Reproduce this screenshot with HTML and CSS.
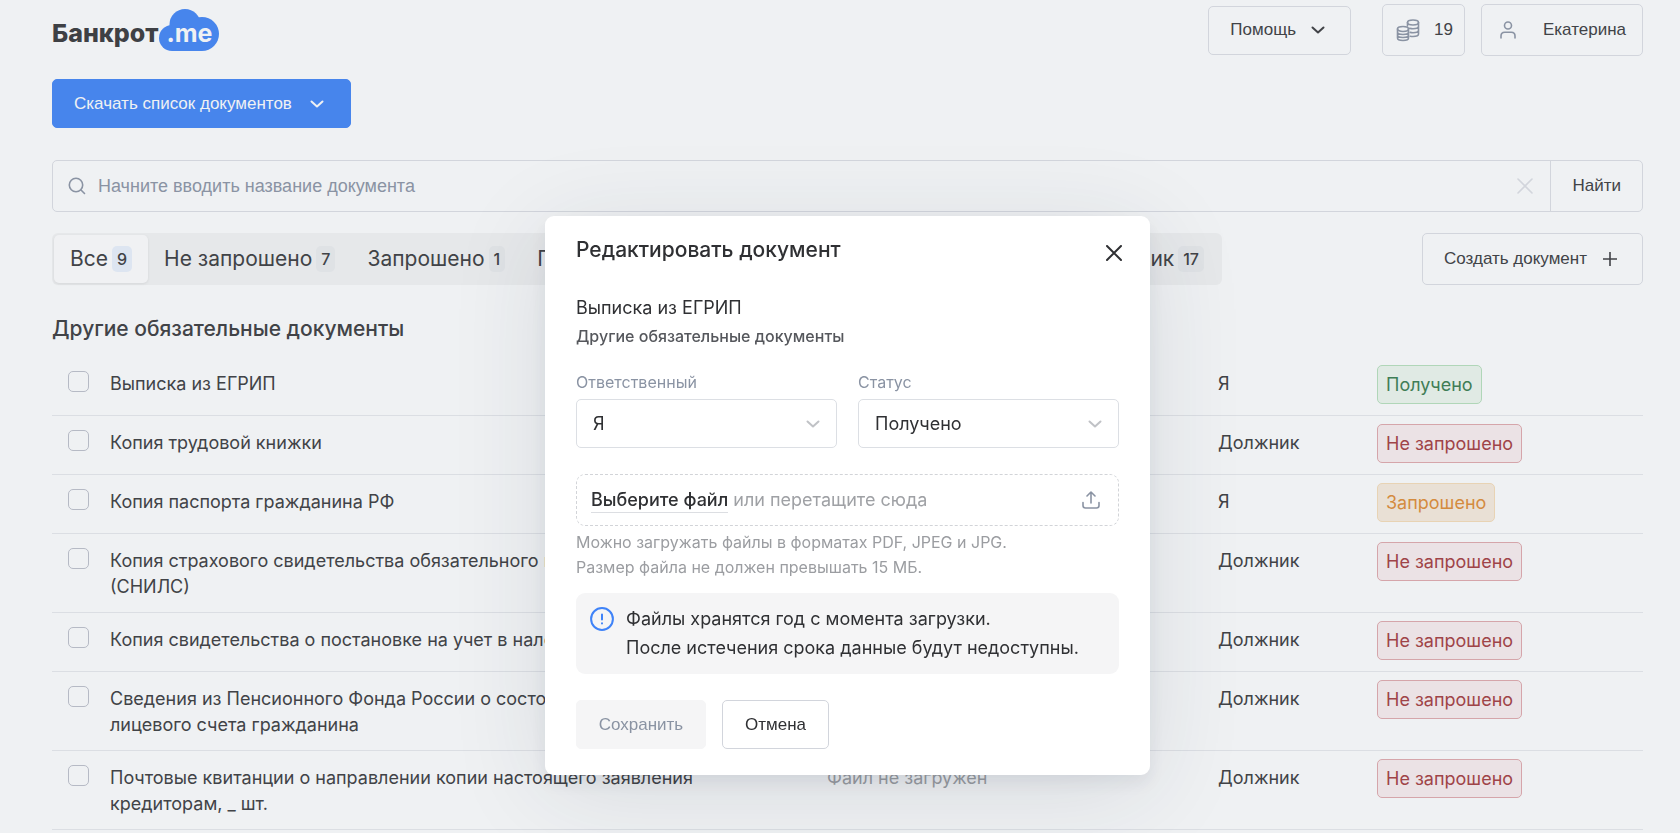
FILE: index.html
```html
<!DOCTYPE html>
<html lang="ru">
<head>
<meta charset="utf-8">
<title>Банкрот.me — документы</title>
<link rel="stylesheet" href="styles.css">
</head>
<body>
<div class="page">
  <header class="header">
    <a class="logo" href="#">
      <span class="logo-name">Банкрот</span>
      <span class="logo-cloud">
        <svg class="logo-shape" viewBox="0 0 60 42" aria-hidden="true"><circle cx="26" cy="15.500" r="15.500"/><circle cx="43" cy="25" r="17"/><circle cx="13" cy="29" r="13"/><path d="M13 16h30v26H13z"/></svg>
        <span class="logo-suffix">.me</span>
      </span>
    </a>
    <div class="header-actions">
      <button class="button help" type="button">Помощь
        <svg class="chevron" viewBox="0 0 14 8" aria-hidden="true"><path d="M1.500 1.500 7 6.500 12.500 1.500"/></svg>
      </button>
      <button class="button coins" type="button">
        <svg class="coins-icon" viewBox="0 0 24 24" aria-hidden="true"><ellipse cx="17" cy="4.500" rx="5.500" ry="2.500"/><path d="M11.500 4.500V8M22.500 4.500V16c0 1.500-2.500 2.500-5.500 2.500-1 0-2-.1-2.800-.3M22.500 8.300c0 1.500-2.500 2.500-5.500 2.500-1.300 0-2.500-.2-3.400-.5M22.500 12.200c0 1.500-2.500 2.500-5.500 2.500-1 0-2-.1-2.800-.3"/><ellipse cx="7" cy="11" rx="5.500" ry="2.500"/><path d="M1.500 11v9c0 1.500 2.500 2.500 5.500 2.500s5.500-1 5.500-2.500v-9M1.500 14c0 1.500 2.500 2.500 5.500 2.500s5.500-1 5.500-2.500M1.500 17c0 1.500 2.500 2.500 5.500 2.500s5.500-1 5.500-2.500"/></svg>
        19
      </button>
      <button class="button user" type="button">
        <svg class="user-icon" viewBox="0 0 16 18" aria-hidden="true"><circle cx="8" cy="4.500" r="3.500"/><path d="M1 17v-2c0-2.200 1.500-3.700 3.700-3.700h6.600c2.200 0 3.700 1.500 3.700 3.700v2"/></svg>
        Екатерина
      </button>
    </div>
  </header>

  <main class="content">
    <button class="button download" type="button">Скачать список документов
      <svg class="chevron" viewBox="0 0 14 8" aria-hidden="true"><path d="M1.500 1.500 7 6.500 12.500 1.500"/></svg>
    </button>

    <form class="search">
      <svg class="search-icon" viewBox="0 0 18 18" aria-hidden="true"><circle cx="8" cy="8" r="6.700"/><path d="m13 13 3.500 3.500"/></svg>
      <input class="search-input" type="text" aria-label="Название документа" placeholder="Начните вводить название документа">
      <button class="clear" type="button" aria-label="Очистить"><svg viewBox="0 0 16 16" aria-hidden="true"><path d="m1 1 14 14M15 1 1 15"/></svg></button>
      <button class="find" type="submit">Найти</button>
    </form>

    <div class="toolbar">
      <nav class="tabs">
        <button class="tab tab-active" type="button">Все <span class="count">9</span></button>
        <button class="tab" type="button">Не запрошено <span class="count">7</span></button>
        <button class="tab" type="button">Запрошено <span class="count">1</span></button>
        <button class="tab" type="button">Получено <span class="count">1</span></button>
        <button class="tab tab-last" type="button">Должник <span class="count">17</span></button>
      </nav>
      <button class="button create" type="button">Создать документ
        <svg class="plus" viewBox="0 0 14 14" aria-hidden="true"><path d="M7 0v14M0 7h14"/></svg>
      </button>
    </div>

    <h2 class="group-title">Другие обязательные документы</h2>
    <table class="documents">
      <colgroup><col class="col-check"><col class="col-name"><col class="col-file"><col class="col-owner"><col class="col-status"></colgroup>
      <tbody>
        <tr><td><input class="check" type="checkbox" aria-label="Выписка из ЕГРИП"></td><td>Выписка из ЕГРИП</td><td class="no-file"></td><td>Я</td><td class="status-cell"><span class="status received">Получено</span></td></tr>
        <tr><td><input class="check" type="checkbox" aria-label="Копия трудовой книжки"></td><td>Копия трудовой книжки</td><td class="no-file"></td><td>Должник</td><td class="status-cell"><span class="status missing">Не запрошено</span></td></tr>
        <tr><td><input class="check" type="checkbox" aria-label="Копия паспорта гражданина РФ"></td><td>Копия паспорта гражданина РФ</td><td class="no-file"></td><td>Я</td><td class="status-cell"><span class="status requested">Запрошено</span></td></tr>
        <tr><td><input class="check" type="checkbox" aria-label="Копия страхового свидетельства"></td><td>Копия страхового свидетельства обязательного пенсионного страхования (СНИЛС)</td><td class="no-file"></td><td>Должник</td><td class="status-cell"><span class="status missing">Не запрошено</span></td></tr>
        <tr><td><input class="check" type="checkbox" aria-label="Копия свидетельства о постановке на учет"></td><td>Копия свидетельства о постановке на учет в налоговой</td><td class="no-file"></td><td>Должник</td><td class="status-cell"><span class="status missing">Не запрошено</span></td></tr>
        <tr><td><input class="check" type="checkbox" aria-label="Сведения из Пенсионного Фонда"></td><td>Сведения из Пенсионного Фонда России о состоянии индивидуального лицевого счета гражданина</td><td class="no-file"></td><td>Должник</td><td class="status-cell"><span class="status missing">Не запрошено</span></td></tr>
        <tr><td><input class="check" type="checkbox" aria-label="Почтовые квитанции"></td><td>Почтовые квитанции о направлении копии настоящего заявления кредиторам, _ шт.</td><td class="no-file">Файл не загружен</td><td>Должник</td><td class="status-cell"><span class="status missing">Не запрошено</span></td></tr>
      </tbody>
    </table>
  </main>
</div>

<div class="overlay">
  <section class="modal" role="dialog" aria-modal="true" aria-labelledby="modal-title">
    <header class="modal-header">
      <h1 class="modal-title" id="modal-title">Редактировать документ</h1>
      <button class="close" type="button" aria-label="Закрыть"><svg viewBox="0 0 16 16" aria-hidden="true"><path d="m1 1 14 14M15 1 1 15"/></svg></button>
    </header>
    <p class="doc-name">Выписка из ЕГРИП</p>
    <p class="doc-group">Другие обязательные документы</p>
    <div class="fields">
      <div class="field">
        <label class="label" for="owner">Ответственный</label>
        <div class="select-box">
          <select class="select" id="owner"><option>Я</option><option>Должник</option></select>
          <svg class="select-arrow" viewBox="0 0 14 8" aria-hidden="true"><path d="M1.500 1.500 7 6.500 12.500 1.500"/></svg>
        </div>
      </div>
      <div class="field">
        <label class="label" for="status">Статус</label>
        <div class="select-box">
          <select class="select" id="status"><option>Получено</option><option>Запрошено</option><option>Не запрошено</option></select>
          <svg class="select-arrow" viewBox="0 0 14 8" aria-hidden="true"><path d="M1.500 1.500 7 6.500 12.500 1.500"/></svg>
        </div>
      </div>
    </div>
    <div class="upload">
      <p class="upload-text"><button class="choose" type="button">Выберите файл</button> или перетащите сюда</p>
      <svg class="upload-icon" viewBox="0 0 18 18" aria-hidden="true"><path d="M9 12V1M5 5l4-4 4 4M1 11.500v3c0 1.500 1 2.500 2.500 2.500h11c1.500 0 2.500-1 2.500-2.500v-3"/></svg>
    </div>
    <p class="hint">Можно загружать файлы в форматах PDF, JPEG и JPG.<br>Размер файла не должен превышать 15 МБ.</p>
    <div class="notice">
      <svg class="notice-icon" viewBox="0 0 24 24" aria-hidden="true"><circle cx="12" cy="12" r="10.900"/><path d="M12 7.500v5M12 16.300v.1"/></svg>
      <p class="notice-text">Файлы хранятся год с момента загрузки.<br>После истечения срока данные будут недоступны.</p>
    </div>
    <footer class="modal-actions">
      <button class="button save" type="button" disabled>Сохранить</button>
      <button class="button cancel" type="button">Отмена</button>
    </footer>
  </section>
</div>
</body>
</html>
```

FILE: styles.css
```css
* { box-sizing: border-box; }

:root {
  --sans: Inter, "Noto Sans", sans-serif;
  --control: "Liberation Sans", Arial, sans-serif;
  --text: #414347;
  --line: #d2d5dc;
  --muted: #8a93a3;
  --blue: #4785ec;
}

html, body { height: 100%; }

body {
  margin: 0;
  overflow: hidden;
  background: #eff1f3;
  color: var(--text);
  font-family: var(--sans);
  font-size: 18px;
  line-height: 26px;
}

h1, h2, p { margin: 0; }

button, input, select { font: inherit; color: inherit; }

button { padding: 0; border: 0; background: none; }

svg { flex: none; fill: none; stroke: currentColor; stroke-width: 1.6; stroke-linecap: round; stroke-linejoin: round; }

.page { padding: 4px 37px 0 52px; }

.header { display: flex; justify-content: space-between; align-items: flex-start; }

.header-actions { display: flex; align-items: center; }

.logo { display: flex; align-items: center; gap: 1px; padding-top: 5px; color: #3e4044; text-decoration: none; }

.logo-name { padding-top: 5px; font-size: 25px; font-weight: 800; }

.logo-cloud { display: grid; place-items: center; width: 60px; height: 42px; }

.logo-shape { grid-area: 1 / 1; width: 60px; height: 42px; fill: var(--blue); stroke: none; }

.logo-suffix { grid-area: 1 / 1; padding-top: 5px; color: #eff1f3; font-size: 25px; font-weight: 700; }

.button {
  display: inline-flex;
  align-items: center;
  justify-content: center;
  height: 49px;
  border: 1px solid var(--line);
  border-radius: 5px;
  font-family: var(--control);
  font-size: 17px;
}

.chevron { width: 14px; height: 8px; stroke-width: 2; }

.help { gap: 15px; margin-right: 31px; padding: 0 25px 0 21px; }

.coins { gap: 14px; height: 52px; margin-right: 16px; padding: 0 11px 0 13px; }

.coins-icon { width: 24px; height: 24px; color: var(--muted); stroke-width: 1.6; }

.user { gap: 27px; height: 52px; padding: 0 16px 0 18px; }

.user-icon { width: 16px; height: 18px; color: var(--muted); }

.download { gap: 18px; margin-top: 23px; padding: 0 26px 0 21px; border-color: var(--blue); background: var(--blue); color: #eff1f3; }

.search {
  display: flex;
  align-items: center;
  height: 52px;
  margin-top: 32px;
  border: 1px solid var(--line);
  border-radius: 5px;
  font-family: var(--control);
}

.search-icon { width: 18px; height: 18px; margin: 0 12px 0 15px; color: var(--muted); }

.search-input { flex: 1; min-width: 0; padding: 0; border: 0; outline: 0; background: none; font-size: 18px; }

.search-input::placeholder { color: var(--muted); opacity: 1; }

.clear { display: flex; padding: 0 17px; color: var(--line); }

.clear svg { width: 16px; height: 16px; }

.find { align-self: stretch; padding: 0 21px; border-left: 1px solid var(--line); font-size: 17px; }

.toolbar { display: flex; justify-content: space-between; gap: 24px; margin-top: 21px; }

.tabs { display: flex; flex: 0 1 1170px; padding: 2px; border-radius: 6px; background: #e6e8ea; }

.tab { display: flex; align-items: center; gap: 4px; padding: 0 16px; border-radius: 5px; font-size: 21px; }

.tab-active { background: #f0f1f3; box-shadow: 0 1px 3px #00000014; }

.tab-active .count { background: #dde5f1; }

.tab-last { margin-left: auto; }

.count { padding: 0 5px; border-radius: 5px; background: #dfe2e5; font-size: 16px; font-weight: 500; }

.create { gap: 16px; height: 52px; padding: 0 25px 0 21px; }

.plus { width: 14px; height: 14px; }

.group-title { margin-top: 30px; font-size: 21px; font-weight: 500; line-height: 28px; }

.documents { width: 100%; margin-top: 14px; border-collapse: separate; border-spacing: 0; table-layout: fixed; }

.col-check { width: 58px; }
.col-file { width: 391px; }
.col-owner { width: 159px; }
.col-status { width: 266px; }

.documents td { padding: 14px 0 12px; border-bottom: 1px solid #dbdee3; vertical-align: top; }

.documents td:nth-child(2) { padding-right: 30px; }

.documents .status-cell { padding: 8px 0 11px; }

.check {
  display: block;
  width: 21px;
  height: 21px;
  margin: 0 0 0 16px;
  border: 1px solid #b6bac5;
  border-radius: 5px;
  appearance: none;
}

.no-file { color: #9a9da2; }

.status { display: block; width: fit-content; padding: 6px 8px 5px; border: 1px solid; border-radius: 5px; }

.received { border-color: #b0d6b8; background: #e0eae4; color: #3f7d56; }
.missing { border-color: #d5a5aa; background: #ebe2e5; color: #9f4448; }
.requested { border-color: #e8d3b4; background: #e9e0d5; color: #d48b3f; }

.overlay {
  position: fixed;
  inset: 0;
  display: flex;
  align-items: flex-start;
  justify-content: center;
  padding: 216px 37px 0 52px;
}

.modal {
  width: 605px;
  padding: 20px 31px 26px;
  border-radius: 9px;
  background: #fff;
  box-shadow: 0 8px 16px #1e284612, 0 16px 100px #28303c1c;
  color: #2f3033;
}

.modal-header { display: flex; align-items: center; justify-content: space-between; }

.modal-title { font-size: 21px; font-weight: 500; line-height: 28px; }

.close { display: flex; margin-right: -6px; padding: 5px 3px 0; }

.close svg { width: 16px; height: 16px; stroke-width: 2; }

.doc-name { margin-top: 31px; }

.doc-group { margin-top: 2px; color: #55575c; font-size: 16px; font-weight: 500; }

.fields { display: grid; grid-template-columns: 1fr 1fr; gap: 21px; margin-top: 20px; }

.label { display: block; margin-bottom: 4px; color: var(--muted); font-size: 16px; }

.select-box { display: grid; align-items: center; }

.select {
  grid-area: 1 / 1;
  width: 100%;
  height: 49px;
  padding: 0 40px 0 16px;
  border: 1px solid #dcdfe4;
  border-radius: 5px;
  background: #fff;
  appearance: none;
}

.select-arrow { grid-area: 1 / 1; justify-self: end; width: 14px; height: 8px; margin-right: 17px; color: #c0c2c6; stroke-width: 2; pointer-events: none; }

.upload {
  display: flex;
  align-items: center;
  justify-content: space-between;
  height: 52px;
  margin-top: 26px;
  padding: 0 17px 0 14px;
  border: 1px dashed #d2d4d8;
  border-radius: 9px;
  color: #9fa1a5;
}

.choose { border-bottom: 1px solid #dcdee2; color: #2f3033; font-weight: 500; line-height: 24px; }

.upload-icon { width: 20px; height: 18px; color: var(--muted); }

.hint { margin-top: 4px; color: #9b9da1; font-size: 16px; line-height: 25px; }

.notice { display: flex; gap: 12px; margin-top: 13px; padding: 11px 14px 12px; border-radius: 9px; background: #f5f5f6; }

.notice-icon { width: 24px; height: 24px; margin-top: 3px; color: #3f83f8; stroke-width: 2; }

.notice-text { line-height: 29px; }

.modal-actions { display: flex; gap: 16px; margin-top: 26px; }

.save { width: 130px; border-color: #f5f5f6; background: #f5f5f6; color: var(--muted); }

.cancel { width: 107px; background: #fff; }
```
